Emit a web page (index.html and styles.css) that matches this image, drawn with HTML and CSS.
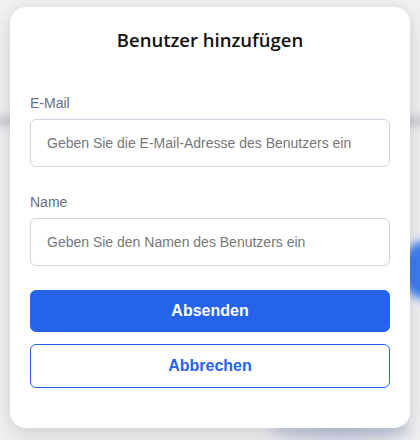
FILE: index.html
```html
<!DOCTYPE html>
<html lang="de">
<head>
<meta charset="utf-8">
<title>Benutzer hinzufügen</title>
<link rel="stylesheet" href="styles.css">
</head>
<body>
<div class="backdrop">
  <div class="blur-line"></div>
  <div class="blur-blob"></div>
  <div class="blur-shadow"></div>
</div>
<div class="overlay">
  <form class="dialog">
    <h1 class="title">Benutzer hinzufügen</h1>
    <div class="field">
      <label class="label" for="email">E-Mail</label>
      <input class="input" id="email" type="email" placeholder="Geben Sie die E-Mail-Adresse des Benutzers ein">
    </div>
    <div class="field">
      <label class="label" for="name">Name</label>
      <input class="input" id="name" type="text" placeholder="Geben Sie den Namen des Benutzers ein">
    </div>
    <div class="actions">
      <button type="button" class="btn btn-primary">Absenden</button>
      <button type="button" class="btn btn-outline">Abbrechen</button>
    </div>
  </form>
</div>
</body>
</html>
```
FILE: styles.css
```css
* { box-sizing: border-box; }
html, body {
  margin: 0;
  padding: 0;
  width: 420px;
  height: 440px;
  overflow: hidden;
  background: #f1f1f3;
  font-family: "Liberation Sans", Arial, sans-serif;
}
.backdrop {
  position: absolute;
  inset: 0;
  overflow: hidden;
}
.blur-line {
  position: absolute;
  left: -20px;
  right: -20px;
  top: 117px;
  height: 8px;
  background: #c4c6cc;
  filter: blur(4px);
}
.blur-blob {
  position: absolute;
  left: 402px;
  top: 240px;
  width: 50px;
  height: 60px;
  border-radius: 50%;
  background: #3b7bf0;
  filter: blur(4px);
}
.blur-shadow {
  position: absolute;
  left: 270px;
  top: 420px;
  width: 140px;
  height: 20px;
  border-radius: 50%;
  background: #c7cbe0;
  filter: blur(6px);
}
.overlay {
  position: relative;
  padding: 7px 10px 0;
}
.dialog {
  background: #ffffff;
  border-radius: 16px;
  padding: 21px 20px 40px;
  box-shadow: 0 8px 24px rgba(40, 44, 60, 0.14), 0 0 10px rgba(40, 44, 60, 0.06);
  display: flex;
  flex-direction: column;
}
.title {
  margin: 0 0 41px;
  font-family: "Open Sans", sans-serif;
  font-weight: 600;
  font-size: 18.5px;
  line-height: 24px;
  text-align: center;
  color: #111111;
}
.field {
  display: flex;
  flex-direction: column;
  gap: 6px;
  margin-bottom: 25px;
}
.field + .field { margin-bottom: 24px; }
.label {
  font-size: 14px;
  line-height: 20px;
  color: #5f6f8c;
}
.input {
  height: 48px;
  border: 1px solid #cdd5e3;
  border-radius: 6px;
  padding: 0 16px;
  font-family: "Liberation Sans", Arial, sans-serif;
  font-size: 14px;
  color: #333;
  background: #fff;
  outline: none;
}
.input::placeholder { color: #777777; }
.actions {
  display: flex;
  flex-direction: column;
  gap: 12px;
}
.btn {
  height: 42px;
  border-radius: 6px;
  font-family: "Liberation Sans", Arial, sans-serif;
  font-weight: 700;
  font-size: 16px;
  cursor: pointer;
}
.btn-primary {
  background: #2563eb;
  border: 1px solid #2563eb;
  color: #ffffff;
}
.btn-outline {
  height: 44px;
  background: #ffffff;
  border: 1px solid #2563eb;
  color: #2563eb;
}
```
